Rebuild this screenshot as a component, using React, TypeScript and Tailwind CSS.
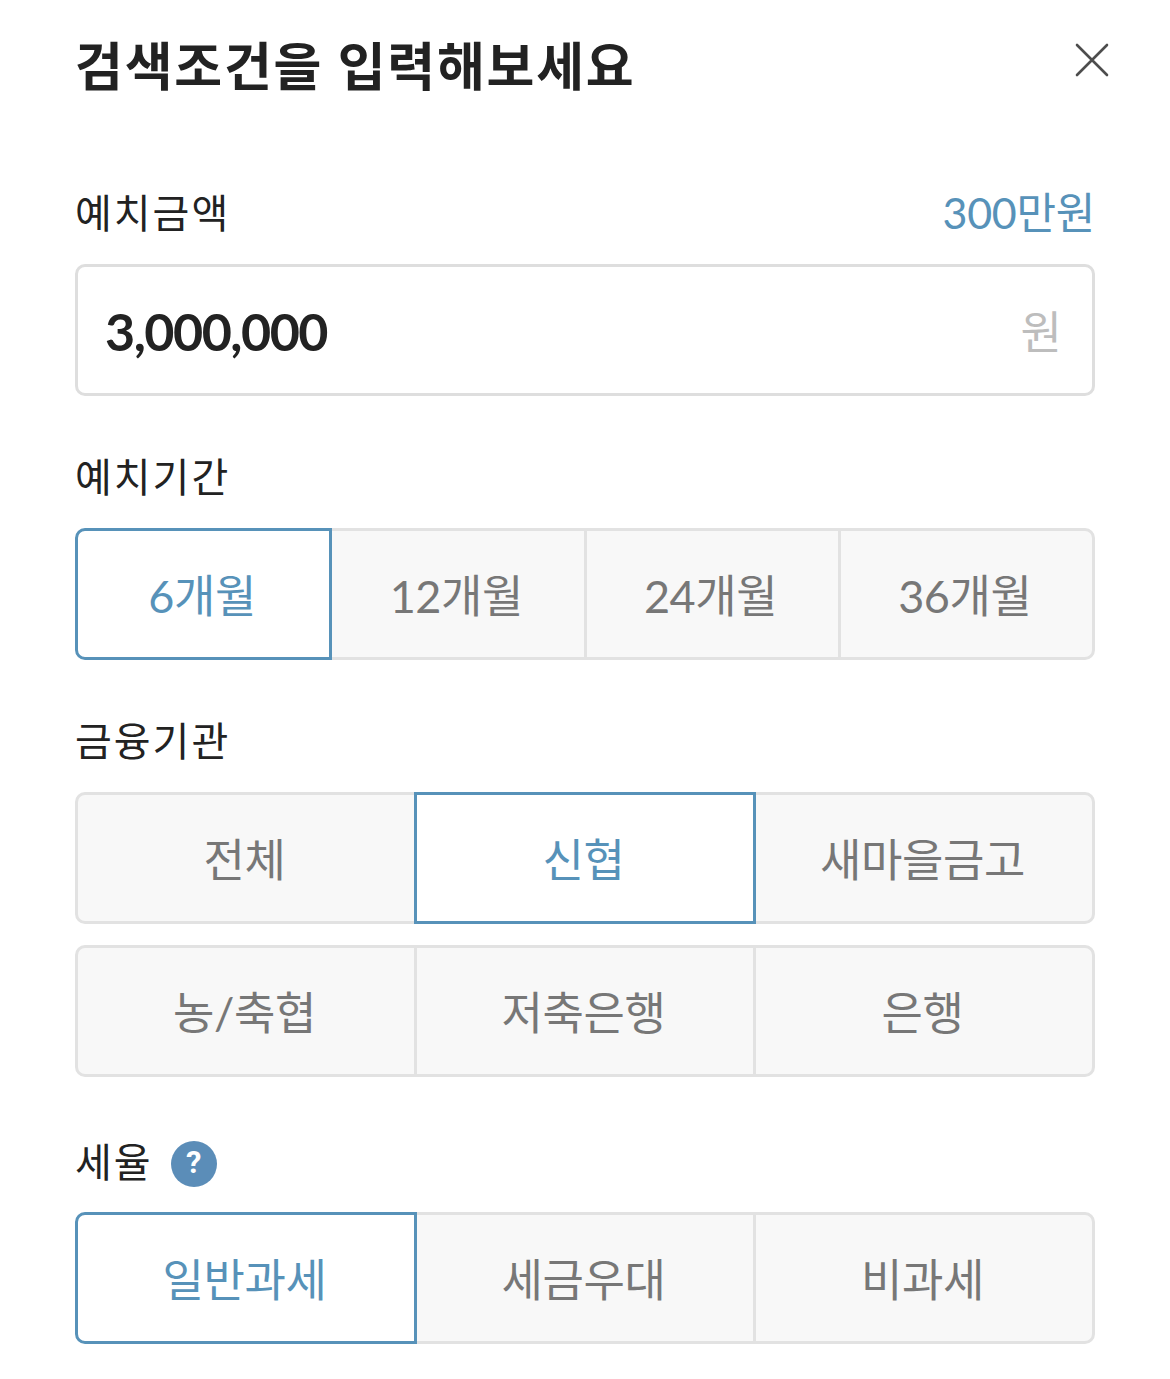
import React from "react";
import clsx from "clsx";

const fontStack = "font-['Lato','Noto_Sans_CJK_KR',sans-serif]";

interface OptionRowProps {
  options: string[];
  selected?: string;
  className?: string;
}

const OptionRow: React.FC<OptionRowProps> = ({ options, selected, className }) => {
  return (
    <div className={clsx("flex h-[132px] w-full", className)}>
      {options.map((option, index) => {
        const isSelected = option === selected;
        const isFirst = index === 0;
        const isLast = index === options.length - 1;
        return (
          <div
            key={option}
            className={clsx(
              "flex flex-1 basis-0 items-center justify-center pt-[6px] pr-[3px] text-[45px] tracking-[-0.4px]",
              isFirst && "rounded-l-[10px]",
              isLast && "rounded-r-[10px]",
              !isFirst && "-ml-[3px]",
              isSelected
                ? "z-10 border-[3px] border-[#5792b9] bg-white text-[#5792b9]"
                : "border-[3px] border-[#e2e2e2] bg-[#f8f8f8] text-[#777777]"
            )}
          >
            {option}
          </div>
        );
      })}
    </div>
  );
};

const Label: React.FC<{ children: React.ReactNode }> = ({ children }) => (
  <div className="text-[40px] leading-[52px] tracking-[2px] text-[#222222]">{children}</div>
);

export default function App() {
  return (
    <div className={clsx("h-[1379px] w-[1170px] overflow-hidden bg-white px-[75px] pt-[32px]", fontStack)}>
      <div className="flex h-[68px] items-center justify-between">
        <h1 className="text-[52px] font-bold leading-[68px] tracking-[1.8px] text-[#222222]">
          검색조건을 입력해보세요
        </h1>
        <svg width="34" height="34" viewBox="0 0 34 34" className="-mr-[14px] -mt-[12px]" fill="none">
          <path d="M2 2L32 32M32 2L2 32" stroke="#4d4d4d" strokeWidth="2.6" strokeLinecap="round" />
        </svg>
      </div>

      <div className="mt-[87px] flex h-[52px] items-center justify-between">
        <Label>예치금액</Label>
        <div className="text-[43px] leading-[52px] tracking-[-0.3px] text-[#5792b9]">300만원</div>
      </div>
      <div className="mt-[25px] flex h-[132px] items-center justify-between rounded-[10px] border-[3px] border-[#dedede] bg-white pl-[27px] pr-[30px]">
        <span className="pt-[2px] text-[52px] font-bold tracking-[-1.5px] text-[#222222]">3,000,000</span>
        <span className="pt-[6px] text-[45px] text-[#bdbdbd]">원</span>
      </div>

      <div className="mt-[55px]">
        <Label>예치기간</Label>
      </div>
      <OptionRow className="mt-[25px]" options={["6개월", "12개월", "24개월", "36개월"]} selected="6개월" />

      <div className="mt-[55px]">
        <Label>금융기관</Label>
      </div>
      <OptionRow className="mt-[25px]" options={["전체", "신협", "새마을금고"]} selected="신협" />
      <OptionRow className="mt-[21px]" options={["농/축협", "저축은행", "은행"]} />

      <div className="mt-[59px] flex h-[52px] items-center gap-[18px]">
        <Label>세율</Label>
        <div className="mt-[3px] flex h-[46px] w-[46px] items-center justify-center rounded-full bg-[#5b8db8] font-['Roboto',sans-serif] text-[31px] font-bold text-white">
          ?
        </div>
      </div>
      <OptionRow className="mt-[24px]" options={["일반과세", "세금우대", "비과세"]} selected="일반과세" />
    </div>
  );
}
